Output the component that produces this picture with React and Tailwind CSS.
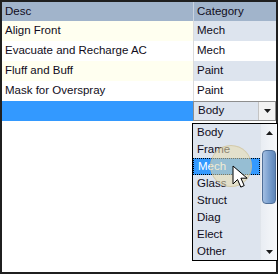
import { useState } from 'react';

const rows = [
  { desc: 'Align Front', cat: 'Mech' },
  { desc: 'Evacuate and Recharge AC', cat: 'Mech' },
  { desc: 'Fluff and Buff', cat: 'Paint' },
  { desc: 'Mask for Overspray', cat: 'Paint' },
];

const options = ['Body', 'Frame', 'Mech', 'Glass', 'Struct', 'Diag', 'Elect', 'Other'];

function Arrow({ down }) {
  return (
    <svg width="7" height="4" viewBox="0 0 7 4">
      <path d={down ? 'M0 0h7L3.5 4z' : 'M0 4h7L3.5 0z'} fill="#1b1b1b" />
    </svg>
  );
}

export default function App() {
  const [selected] = useState('Mech');

  return (
    <div
      className="relative w-[278px] h-[274px] border-2 border-[#1f1f1f] bg-white text-[11.5px] text-[#100c20]"
      style={{ fontFamily: '"Liberation Sans", Arial, sans-serif' }}
    >
      {/* header */}
      <div className="flex h-[19px] bg-[#a1b4cb]">
        <div className="w-[191px] flex items-center pl-[3px]">Desc</div>
        <div className="flex-1 flex items-center pl-[3px] border-l border-[#c9d4e1]">Category</div>
      </div>

      {rows.map((r, i) => (
        <div key={r.desc} className="flex h-[20px]">
          <div className={`w-[191px] flex items-center pl-[3px] ${i % 2 === 0 ? 'bg-[#fffff0]' : 'bg-white'}`}>
            {r.desc}
          </div>
          <div
            className={`flex-1 flex items-center pl-[3px] border-l border-[#dcdcdc] ${
              i % 2 === 0 ? 'bg-[#dde4ee]' : 'bg-white'
            }`}
          >
            {r.cat}
          </div>
        </div>
      ))}

      {/* editing row */}
      <div className="flex h-[20px]">
        <div className="w-[191px] bg-[#3399ff]" />
        <div className="flex-1 flex border border-[#8e8e8e] bg-[#dde4ee]">
          <div className="flex-1 flex items-center pl-[4px]">Body</div>
          <div className="w-[17px] flex items-center justify-center bg-[#f2f2f2] border-l border-[#c4c4c4]">
            <Arrow down />
          </div>
        </div>
      </div>

      {/* dropdown list */}
      <div className="absolute left-[190px] top-[121px] w-[86px] h-[138px] flex border border-black bg-[#dde4ee]">
        <div className="flex-1 flex flex-col">
          {options.map((o) => (
            <div
              key={o}
              className={`h-[17px] flex items-center pl-[4px] ${
                o === selected ? 'bg-[#3399ff] text-white border border-dotted border-black pl-[3px]' : ''
              }`}
            >
              {o}
            </div>
          ))}
        </div>
        <div className="w-[17px] flex flex-col bg-gradient-to-r from-[#e9edf3] to-[#f6f8fa] border-l border-[#e0e5eb]">
          <div className="h-[17px] flex items-center justify-center">
            <Arrow />
          </div>
          <div className="flex-1 relative">
            <div className="absolute left-[1px] right-[1px] top-[9px] h-[54px] rounded-[4px] border border-[#4f6f98] bg-gradient-to-r from-[#a3bfe2] via-[#7aa0cf] to-[#5e86b8]" />
          </div>
          <div className="h-[17px] flex items-center justify-center">
            <Arrow down />
          </div>
        </div>
      </div>

      {/* click highlight + cursor */}
      <div className="absolute left-[208px] top-[143px] w-[42px] h-[42px] rounded-full bg-[#e8dcae]/55 border border-[#c9bd92]/60" />
      <svg className="absolute left-[230px] top-[163px]" width="16" height="24" viewBox="0 0 16 24">
        <path
          d="M1 1v18l4.5-4.5 3.3 7.6 3.4-1.5-3.3-7.4h6.2z"
          fill="#fff"
          stroke="#000"
          strokeWidth="1"
          strokeLinejoin="miter"
        />
      </svg>
    </div>
  );
}
